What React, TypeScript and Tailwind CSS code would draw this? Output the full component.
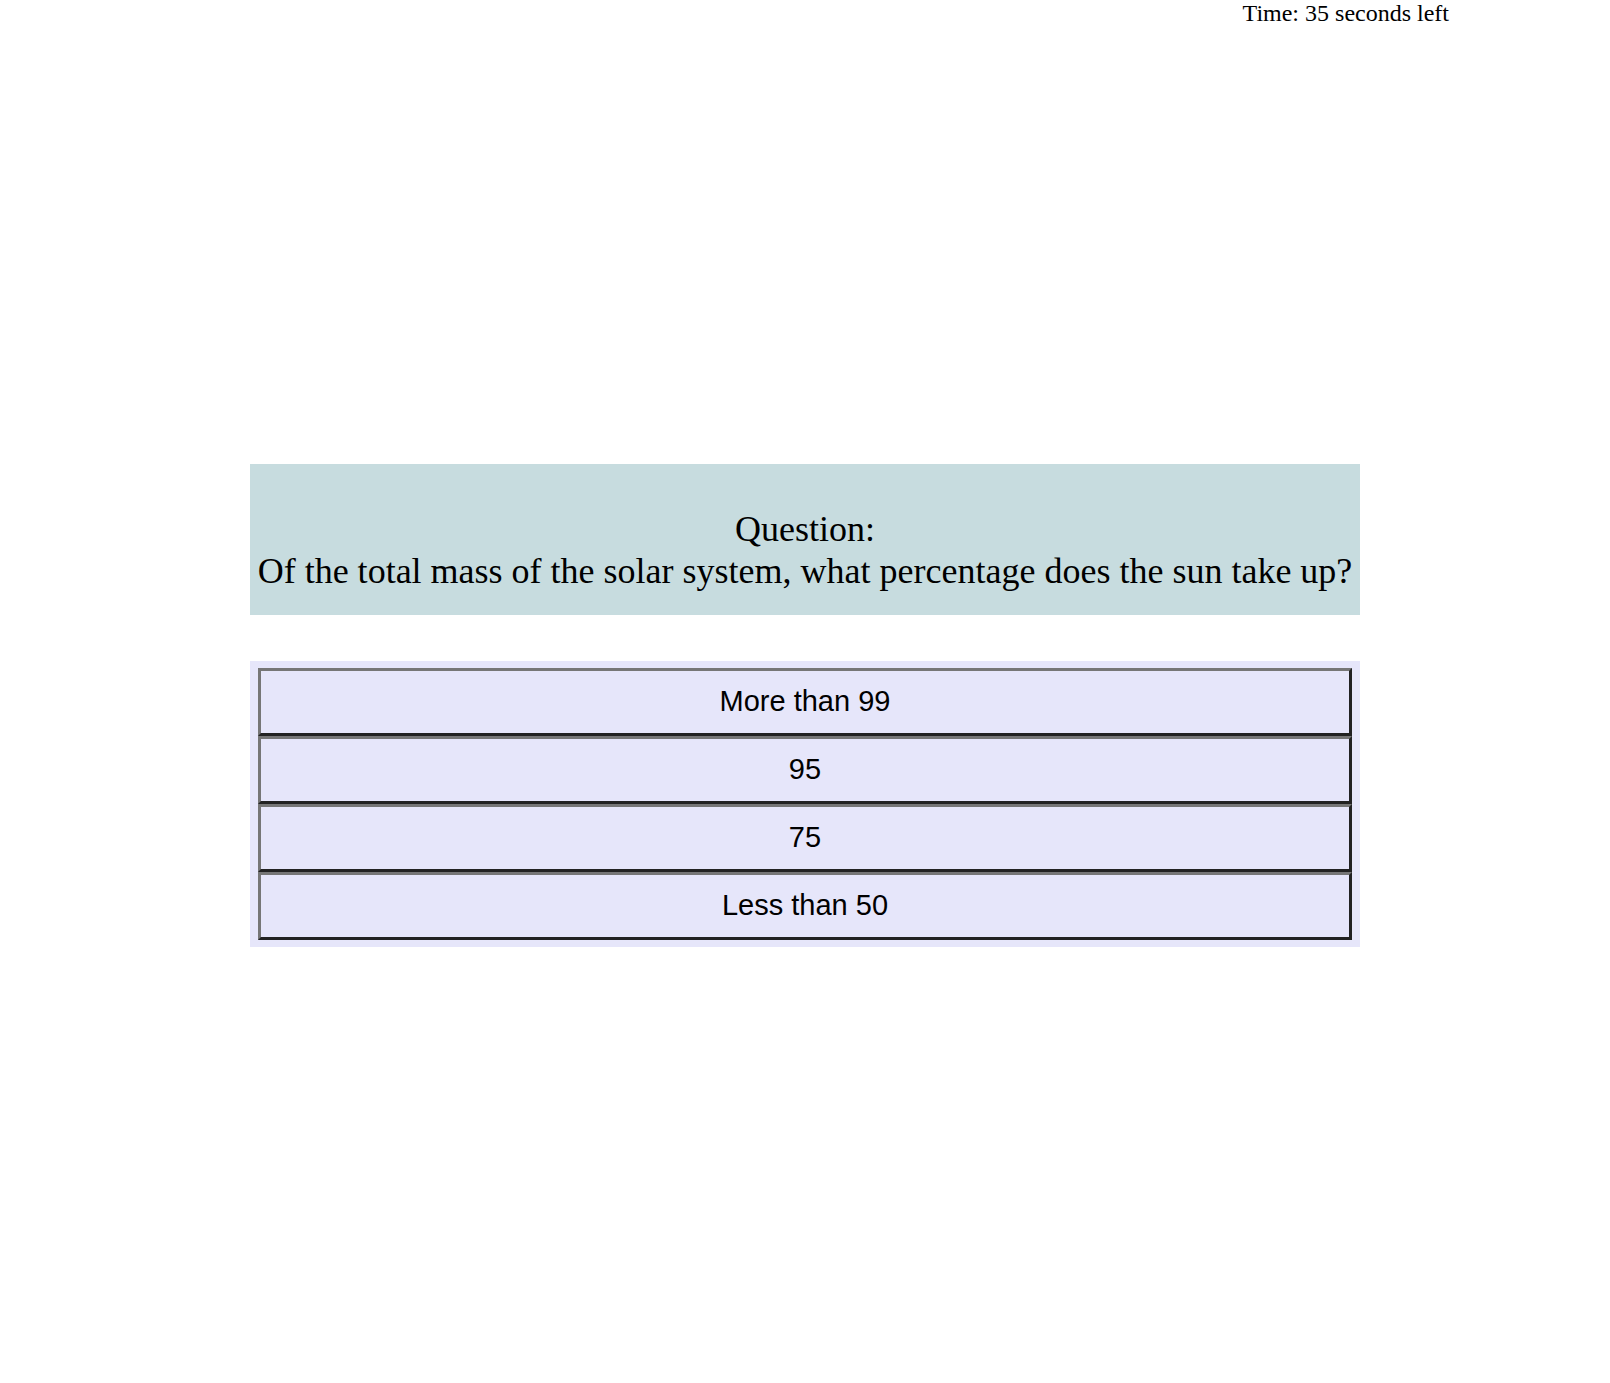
const answers = ["More than 99", "95", "75", "Less than 50"];

export default function App() {
  return (
    <div className="min-h-screen bg-white text-black">
      {/* timer */}
      <div className="flex justify-end pr-[161px] font-['Liberation_Serif',serif] text-[24px] leading-[27px]">
        Time: 35 seconds left
      </div>

      <div className="mx-auto mt-[437px] w-[1110px]">
        {/* question */}
        <div className="bg-[#c7dcdf] pb-[23px] pt-[44px] text-center font-['Liberation_Serif',serif] text-[36px] leading-[42px]">
          <div>Question:</div>
          <div>Of the total mass of the solar system, what percentage does the sun take up?</div>
        </div>

        {/* answers */}
        <div className="mt-[46px] bg-[#e6e6fa] px-[8px] pb-[7px] pt-[7px]">
          {answers.map((a) => (
            <button
              key={a}
              className="block h-[68px] w-full border-[3px] border-b-[#222] border-l-[#767676] border-r-[#222] border-t-[#767676] bg-[#e6e6fa] text-center font-['Liberation_Sans',Arial,sans-serif] text-[29px] text-black"
            >
              {a}
            </button>
          ))}
        </div>
      </div>
    </div>
  );
}
